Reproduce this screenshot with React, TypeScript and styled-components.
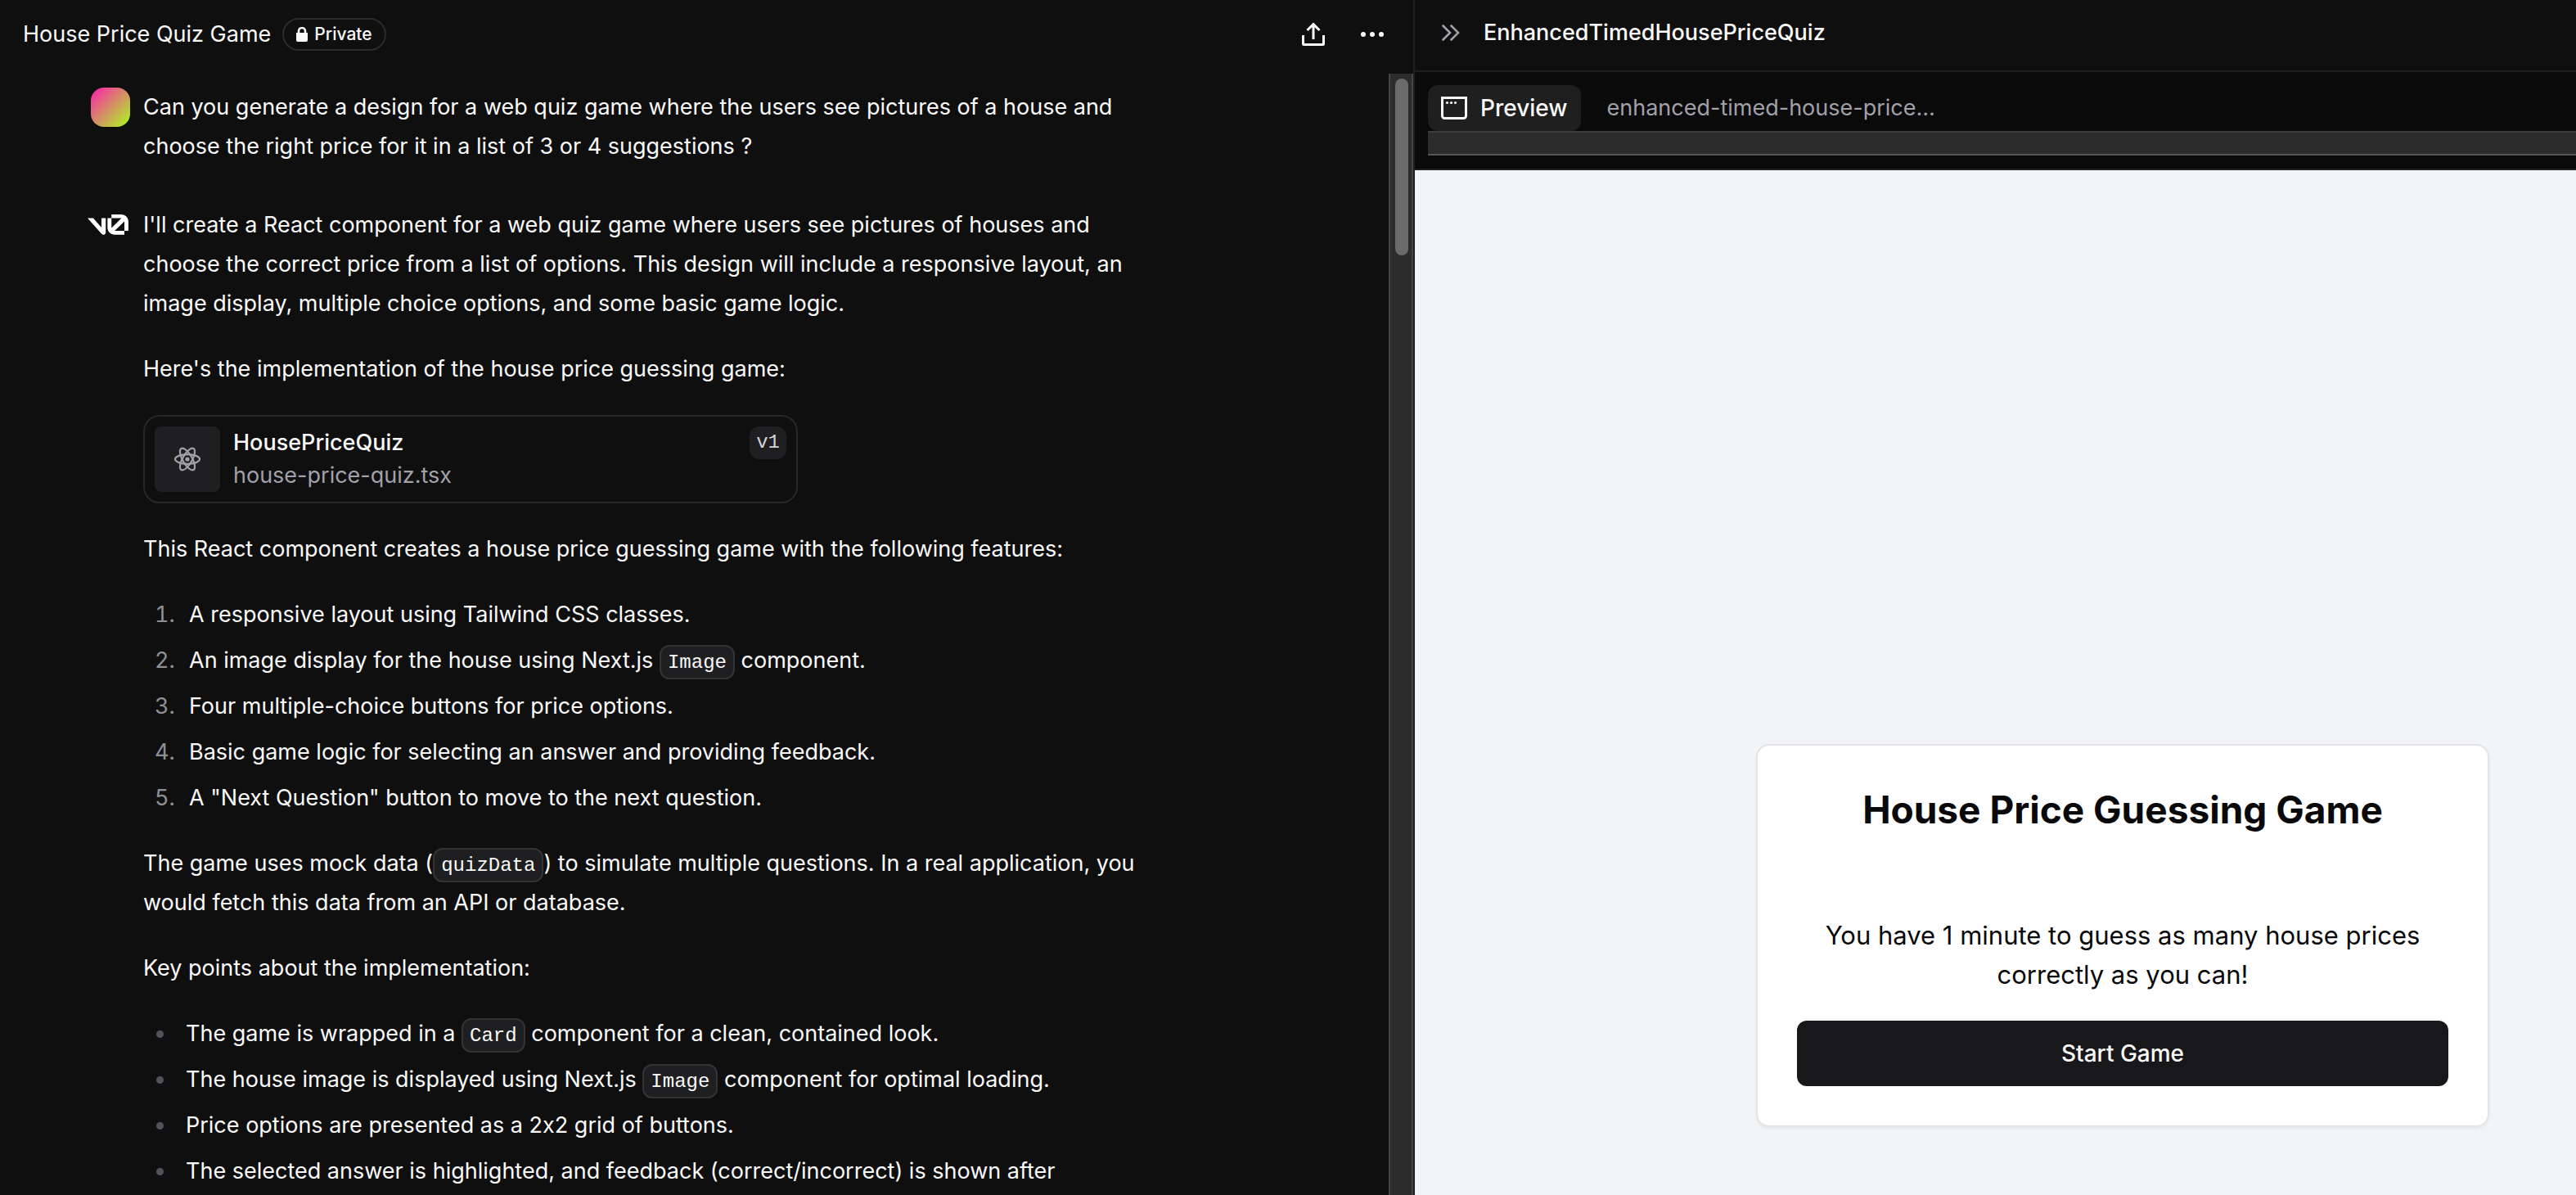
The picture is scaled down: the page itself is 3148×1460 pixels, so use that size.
import React from "react";
import styled, { createGlobalStyle } from "styled-components";

const sans = `Inter, "Liberation Sans", sans-serif`;
const mono = `"Liberation Mono", monospace`;

const GlobalStyle = createGlobalStyle`
  *, *::before, *::after { box-sizing: border-box; }
  body {
    margin: 0;
    background: #0f0f0f;
    color: #fafafa;
    font: 400 27px/48px ${sans};
    font-variant-ligatures: no-contextual;
  }
  h1, h2, p, ol, ul { margin: 0; padding: 0; font: inherit; font-variant-ligatures: inherit; }
  button { border: 0; padding: 0; background: none; color: inherit; font: inherit; cursor: pointer; }
  svg { display: block; flex: none; }
`;

const Page = styled.div`
  display: grid;
  grid-template-columns: minmax(0, 1727fr) minmax(0, 1421fr);
  height: 100vh;
  overflow: hidden;
`;

const ChatPane = styled.main`
  display: flex;
  flex-direction: column;
  min-height: 0;
`;

const ChatHeader = styled.header`
  display: flex;
  align-items: center;
  flex: none;
  height: 90px;
  padding: 0 34px 6px 28px;
`;

const ChatTitle = styled.h1`
  margin-right: 14px;
`;

const Badge = styled.span`
  display: flex;
  align-items: center;
  gap: 8px;
  height: 40px;
  padding: 0 15px;
  border: 2px solid #2b2b2b;
  border-radius: 20px;
  font-size: 21px;
  font-weight: 500;
`;

const HeaderActions = styled.div`
  display: flex;
  gap: 40px;
  margin-left: auto;
`;

const IconButton = styled.button`
  display: flex;
  align-items: center;
  justify-content: center;
  width: 32px;
  height: 32px;
`;

const ChatBody = styled.div`
  display: flex;
  flex: 1;
  min-height: 0;
`;

const Thread = styled.div`
  flex: 1;
  min-width: 0;
  overflow: hidden;
  display: flex;
  flex-direction: column;
  gap: 48px;
  padding: 17px 40px 0 107px;
`;

const ScrollTrack = styled.div`
  flex: none;
  width: 30px;
  padding: 6px;
  border: solid #454545;
  border-width: 0 2px;
  background: #2c2c2c;
`;

const ScrollThumb = styled.div`
  width: 16px;
  height: 216px;
  border-radius: 8px;
  background: #6b6b6b;
`;

const Message = styled.article`
  display: grid;
  grid-template-columns: 52px minmax(0, 1230px);
  column-gap: 16px;
  flex: none;
`;

const Avatar = styled.div`
  width: 48px;
  height: 48px;
  margin-left: 4px;
  border-radius: 16px;
  background: linear-gradient(135deg, #ff1cae, #a8ff1c);
`;

const LogoSlot = styled.div`
  padding-top: 11px;
`;

const Prose = styled.div`
  display: flex;
  flex-direction: column;
  gap: 32px;
`;

const Code = styled.code`
  padding: 6px 8px 5px;
  border: 2px solid #333336;
  border-radius: 12px;
  background: #1f1f22;
  font: 24px/1 ${mono};
`;

const OrderedList = styled.ol`
  display: flex;
  flex-direction: column;
  gap: 8px;
  padding-left: 46px;
`;

const BulletList = styled.ul`
  display: flex;
  flex-direction: column;
  gap: 8px;
  padding-left: 40px;
`;

const NumberedItem = styled.li`
  padding-left: 10px;
  &::marker { color: #8f8f98; }
`;

const BulletItem = styled.li`
  padding-left: 12px;
  &::marker { color: #52525b; }
`;

const FileCard = styled.button`
  display: flex;
  align-items: flex-start;
  gap: 16px;
  width: 800px;
  max-width: 100%;
  padding: 12px;
  border: 2px solid #27272a;
  border-radius: 20px;
  text-align: left;
`;

const FileIcon = styled.span`
  display: flex;
  align-items: center;
  justify-content: center;
  width: 80px;
  height: 80px;
  border-radius: 8px;
  background: #1f1f22;
  color: #a1a1aa;
`;

const FileText = styled.span`
  display: flex;
  flex-direction: column;
  flex: 1;
  line-height: 40px;
`;

const FileName = styled.span`
  font-weight: 500;
`;

const FilePath = styled.span`
  color: #a1a1aa;
`;

const Version = styled.span`
  padding: 0 8px;
  border-radius: 12px;
  background: #1f1f22;
  color: #d4d4d8;
  font: 24px/40px ${mono};
`;

const PreviewPane = styled.aside`
  display: flex;
  flex-direction: column;
  min-width: 0;
  border-left: 2px solid #1f1f1f;
`;

const PreviewHeader = styled.header`
  display: flex;
  align-items: center;
  gap: 24px;
  flex: none;
  height: 88px;
  padding: 0 28px 6px;
  border-bottom: 2px solid #1f1f1f;
`;

const PreviewTitle = styled.h2`
  font-weight: 500;
`;

const TabBar = styled.div`
  flex: none;
  padding: 16px 0 16px 16px;
  border-bottom: 2px solid #1f1f1f;
  background: #0a0a0a;
`;

const Tabs = styled.nav`
  display: flex;
  gap: 16px;
`;

const Tab = styled.button<{ $active?: boolean }>`
  display: flex;
  align-items: center;
  gap: 16px;
  height: 56px;
  padding: 0 16px;
  border-radius: 12px;
  background: ${(p) => (p.$active ? "#1f1f1f" : "none")};
  color: ${(p) => (p.$active ? "#fafafa" : "#a1a1aa")};
  font-size: ${(p) => (p.$active ? "28px" : "27px")};
  font-weight: ${(p) => (p.$active ? 500 : 400)};
`;

const TabScroll = styled.div`
  height: 30px;
  border: solid #3d3d3d;
  border-width: 2px 0;
  border-bottom-color: #555;
  background: #2c2c2c;
`;

const Canvas = styled.section`
  display: flex;
  flex: 1;
  align-items: flex-end;
  justify-content: flex-end;
  padding: 48px 106px 83px 48px;
  background: #f3f4f6;
  color: #09090b;
`;

const GameCard = styled.div`
  display: flex;
  flex-direction: column;
  width: 896px;
  padding: 48px;
  border: 2px solid #e4e4e7;
  border-radius: 16px;
  background: #fff;
  box-shadow: 0 2px 4px rgba(0, 0, 0, 0.06);
  text-align: center;
`;

const GameTitle = styled.h2`
  padding: 6px 0 106px;
  font-size: 46px;
  font-weight: 700;
  line-height: 48px;
`;

const GameText = styled.p`
  margin-bottom: 32px;
  padding: 0 32px;
  font-size: 31px;
`;

const StartButton = styled.button`
  height: 80px;
  border-radius: 12px;
  background: #18181b;
  color: #fafafa;
  font-size: 28px;
  font-weight: 500;
`;

const LockIcon = () => (
  <svg width="14" height="18" viewBox="0 0 14 18" aria-hidden="true">
    <path d="M3 8V5a4 4 0 0 1 8 0v3" fill="none" stroke="currentColor" strokeWidth="2.6" />
    <path d="M0 7h14v9a2 2 0 0 1-2 2H2a2 2 0 0 1-2-2z" fill="currentColor" />
  </svg>
);

const ShareIcon = () => (
  <svg width="32" height="32" viewBox="0 0 32 32" fill="none" stroke="currentColor" strokeWidth="3" aria-hidden="true">
    <path d="M3.5 17v10.5a1 1 0 0 0 1 1h23a1 1 0 0 0 1-1V17" />
    <path d="M8.5 11 16 3.6l7.5 7.4M16 4v18" />
  </svg>
);

const DotsIcon = () => (
  <svg width="32" height="32" viewBox="0 0 32 32" fill="currentColor" aria-hidden="true">
    <circle cx="5" cy="16" r="3" />
    <circle cx="16" cy="16" r="3" />
    <circle cx="27" cy="16" r="3" />
  </svg>
);

const CollapseIcon = () => (
  <svg
    width="32"
    height="32"
    viewBox="0 0 32 32"
    fill="none"
    stroke="#a1a1aa"
    strokeWidth="2.6"
    strokeLinecap="round"
    aria-hidden="true"
  >
    <path d="M6.5 7.5l8.5 8.5-8.5 8.5M16.5 7.5l8.5 8.5-8.5 8.5" />
  </svg>
);

const WindowIcon = () => (
  <svg width="32" height="32" viewBox="0 0 32 32" aria-hidden="true">
    <path d="M1.5 3.5h29V25.5a3 3 0 0 1-3 3h-23a3 3 0 0 1-3-3z" fill="none" stroke="currentColor" strokeWidth="3" />
    <circle cx="7.5" cy="9.5" r="1.6" fill="currentColor" />
    <circle cx="12.5" cy="9.5" r="1.6" fill="currentColor" />
    <circle cx="17.5" cy="9.5" r="1.6" fill="currentColor" />
  </svg>
);

const ReactIcon = () => (
  <svg width="32" height="32" viewBox="0 0 32 32" fill="none" stroke="currentColor" strokeWidth="2.2" aria-hidden="true">
    <ellipse cx="16" cy="16" rx="15" ry="5.8" />
    <ellipse cx="16" cy="16" rx="15" ry="5.8" transform="rotate(60 16 16)" />
    <ellipse cx="16" cy="16" rx="15" ry="5.8" transform="rotate(120 16 16)" />
    <circle cx="16" cy="16" r="2.6" fill="currentColor" stroke="none" />
  </svg>
);

const V0Logo = () => (
  <svg width="50" height="25" viewBox="0 0 40 20" fill="#fff" role="img" aria-label="v0">
    <path d="M23.3919 0H32.9188C36.7819 0 39.9136 3.13165 39.9136 6.99475V16.0805H36.0006V6.99475C36.0006 6.90167 35.9969 6.80925 35.9898 6.71766L26.4628 16.079C26.4949 16.08 26.5272 16.0805 26.5595 16.0805H36.0006V19.7762H26.5595C22.6964 19.7762 19.4788 16.6139 19.4788 12.7508V3.68923H23.3919V12.7508C23.3919 12.9253 23.4054 13.0977 23.4316 13.2668L33.1682 3.6995C33.0861 3.6927 33.003 3.68923 32.9188 3.68923H23.3919V0Z" />
    <path d="M13.7688 19.0956L0 3.68759H5.53933L13.6231 12.7337V3.68759H17.7535V17.5746C17.7535 19.6705 15.1654 20.6584 13.7688 19.0956Z" />
  </svg>
);

const features: React.ReactNode[] = [
  "A responsive layout using Tailwind CSS classes.",
  <>An image display for the house using Next.js <Code>Image</Code> component.</>,
  "Four multiple-choice buttons for price options.",
  "Basic game logic for selecting an answer and providing feedback.",
  'A "Next Question" button to move to the next question.',
];

const keyPoints: React.ReactNode[] = [
  <>The game is wrapped in a <Code>Card</Code> component for a clean, contained look.</>,
  <>The house image is displayed using Next.js <Code>Image</Code> component for optimal loading.</>,
  "Price options are presented as a 2x2 grid of buttons.",
  "The selected answer is highlighted, and feedback (correct/incorrect) is shown after",
];

export default function App() {
  return (
    <>
      <GlobalStyle />
      <Page>
        <ChatPane>
          <ChatHeader>
            <ChatTitle>House Price Quiz Game</ChatTitle>
            <Badge><LockIcon />Private</Badge>
            <HeaderActions>
              <IconButton aria-label="Share"><ShareIcon /></IconButton>
              <IconButton aria-label="More"><DotsIcon /></IconButton>
            </HeaderActions>
          </ChatHeader>
          <ChatBody>
            <Thread>
              <Message>
                <Avatar />
                <Prose>
                  <p>
                    Can you generate a design for a web quiz game where the users see pictures of a house and
                    choose the right price for it in a list of 3 or 4 suggestions ?
                  </p>
                </Prose>
              </Message>
              <Message>
                <LogoSlot><V0Logo /></LogoSlot>
                <Prose>
                  <p>
                    I'll create a React component for a web quiz game where users see pictures of houses and
                    choose the correct price from a list of options. This design will include a responsive
                    layout, an image display, multiple choice options, and some basic game logic.
                  </p>
                  <p>Here's the implementation of the house price guessing game:</p>
                  <FileCard>
                    <FileIcon><ReactIcon /></FileIcon>
                    <FileText>
                      <FileName>HousePriceQuiz</FileName>
                      <FilePath>house-price-quiz.tsx</FilePath>
                    </FileText>
                    <Version>v1</Version>
                  </FileCard>
                  <p>This React component creates a house price guessing game with the following features:</p>
                  <OrderedList>
                    {features.map((feature, i) => <NumberedItem key={i}>{feature}</NumberedItem>)}
                  </OrderedList>
                  <p>
                    The game uses mock data (<Code>quizData</Code>) to simulate multiple questions. In a real
                    application, you would fetch this data from an API or database.
                  </p>
                  <p>Key points about the implementation:</p>
                  <BulletList>
                    {keyPoints.map((point, i) => <BulletItem key={i}>{point}</BulletItem>)}
                  </BulletList>
                </Prose>
              </Message>
            </Thread>
            <ScrollTrack><ScrollThumb /></ScrollTrack>
          </ChatBody>
        </ChatPane>
        <PreviewPane>
          <PreviewHeader>
            <IconButton aria-label="Collapse panel"><CollapseIcon /></IconButton>
            <PreviewTitle>EnhancedTimedHousePriceQuiz</PreviewTitle>
          </PreviewHeader>
          <TabBar>
            <Tabs>
              <Tab $active><WindowIcon />Preview</Tab>
              <Tab>enhanced-timed-house-price…</Tab>
            </Tabs>
            <TabScroll />
          </TabBar>
          <Canvas>
            <GameCard>
              <GameTitle>House Price Guessing Game</GameTitle>
              <GameText>You have 1 minute to guess as many house prices correctly as you can!</GameText>
              <StartButton>Start Game</StartButton>
            </GameCard>
          </Canvas>
        </PreviewPane>
      </Page>
    </>
  );
}
